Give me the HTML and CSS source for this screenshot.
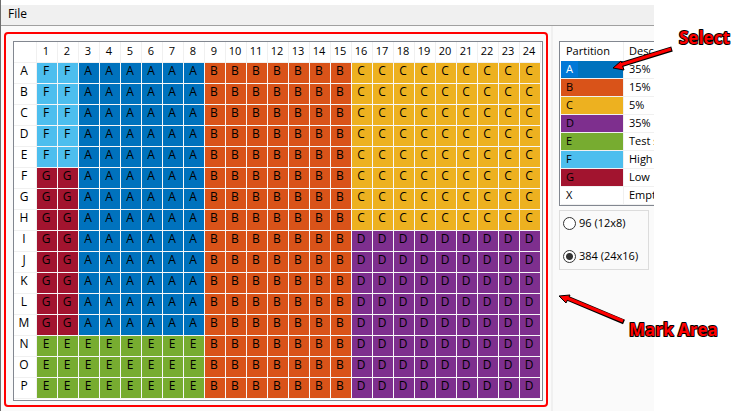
FILE: index.html
```html
<!DOCTYPE html>
<html lang="en">
<head>
<meta charset="utf-8">
<title>Plate layout</title>
<link rel="stylesheet" href="styles.css">
</head>
<body>
<div class="app">
  <nav class="menubar"><button class="menu-item" type="button">File</button></nav>
  <main class="content">
    <section class="mark-area">
      <table class="plate" id="plate"></table>
    </section>
    <aside class="side">
      <div class="list-box">
        <table class="list">
          <thead><tr><th>Partition</th><th>Description</th></tr></thead>
          <tbody>
            <tr><td class="p-A selected"><span>A</span></td><td>35%</td></tr>
            <tr><td class="p-B">B</td><td>15%</td></tr>
            <tr><td class="p-C">C</td><td>5%</td></tr>
            <tr><td class="p-D">D</td><td>35%</td></tr>
            <tr><td class="p-E">E</td><td>Test set</td></tr>
            <tr><td class="p-F">F</td><td>High</td></tr>
            <tr><td class="p-G">G</td><td>Low</td></tr>
            <tr><td>X</td><td>Empty</td></tr>
          </tbody>
        </table>
      </div>
      <div class="formats">
        <label><input type="radio" name="format">96 (12x8)</label>
        <label><input type="radio" name="format" checked>384 (24x16)</label>
      </div>
    </aside>
  </main>
</div>
<svg class="notes" width="750" height="411" viewBox="0 0 750 411">
  <path class="shaft-edge" d="M620 65 L672 49 M567 298 L624 322"/>
  <path class="head" d="M613 68 L621 61 L624 70 Z M559 296 L570 295 L566 303 Z"/>
  <path class="shaft" d="M620 65 L671 49 M567 298 L623 321"/>
  <text x="679" y="44">Select</text>
  <text x="629" y="336">Mark Area</text>
</svg>
<script src="plate.js"></script>
</body>
</html>
```
FILE: styles.css
```css
* { box-sizing: border-box; }
body {
  margin: 0;
  background: #fff;
  color: #000;
  font: 12px/16px "Open Sans", "Noto Sans", sans-serif;
}
.app {
  display: flex;
  flex-direction: column;
  min-height: 100vh;
  margin-right: 96px;
  border-left: 1px solid #6e6e6e;
  background: #fafafa;
  overflow: hidden;
}
.menubar {
  height: 26px;
  border-top: 5px solid #fff;
  border-bottom: 1px solid #a0a0a0;
  background: #f0f0f0;
}
.menu-item {
  display: block;
  padding: 1px 7px;
  border: 0;
  background: none;
  font: inherit;
}
.content { display: flex; flex: 1; }
.mark-area {
  flex: none;
  align-self: flex-start;
  margin: 6px 3px 0;
  padding: 7px 3px 4px 7px;
  border: 2px solid #f00;
  border-radius: 4px;
}
.plate, .list {
  border-collapse: separate;
  border-spacing: 0;
  background: #fff;
}
.plate {
  padding: 0 1px 1px 0;
  border: 1px solid #828790;
}
.plate th, .plate td {
  width: 21px;
  height: 21px;
  padding: 0 2px 4px 0;
  border: solid #f0f0f0;
  border-width: 0 1px 1px 0;
  font-weight: 400;
  text-align: center;
  white-space: nowrap;
}
.plate thead th {
  padding: 0 2px 2px 0;
  font-size: 11px;
}
.plate tr > :first-child { width: 23px; }
.plate td {
  border-color: #f7f7f7;
  color: #000;
}
.side {
  flex: 1;
  min-width: 0;
  padding: 15px 0 0 6px;
  border-left: 2px solid #f0f0f0;
  font-size: 11px;
}
.list-box {
  border: 1px solid #828790;
  border-right: 0;
  padding: 0 0 0 1px;
  background: #fff;
  overflow: hidden;
}
.list { table-layout: fixed; width: 160px; }
.list th, .list td {
  height: 18px;
  padding: 0 5px 1px;
  border-bottom: 1px solid #f0f0f0;
  font-weight: 400;
  text-align: left;
  line-height: 16px;
}
.list th { height: 19px; border-bottom: 0; }
.list th:first-child { width: 62px; }
.list th + th, .list td + td { border-left: 1px solid #f0f0f0; }
.list .selected span {
  display: inline-block;
  margin-left: -5px;
  padding: 0 5px;
  background: #0078d7;
  color: #fff;
}
.p-A { background: #0072bd; }
.p-B { background: #d95319; }
.p-C { background: #edb120; }
.p-D { background: #7e2f8e; }
.p-E { background: #77ac30; }
.p-F { background: #4dbeee; }
.p-G { background: #a2142f; }
.formats {
  display: flex;
  flex-direction: column;
  gap: 17px;
  width: 90px;
  margin-top: 4px;
  padding: 4px 3px 5px;
  border: 1px solid #dcdcdc;
}
.formats label {
  display: flex;
  align-items: center;
  gap: 3px;
  white-space: nowrap;
}
.formats input {
  appearance: none;
  flex: none;
  width: 13px;
  height: 13px;
  margin: 0;
  border: 1px solid #333;
  border-radius: 50%;
  background: #fff;
}
.formats input:checked { background: radial-gradient(circle, #333 3px, #fff 4px); }
.notes {
  position: absolute;
  top: 0;
  left: 0;
  pointer-events: none;
}
.notes path { stroke: #000; stroke-linejoin: round; }
.notes .head { fill: #f00; }
.notes .shaft-edge { stroke-width: 5px; }
.notes .shaft { stroke: #f00; stroke-width: 3px; }
.notes text {
  fill: #f00;
  stroke: #000;
  stroke-width: 2px;
  stroke-linejoin: round;
  paint-order: stroke;
  font: 700 17px "Open Sans", "Noto Sans", sans-serif;
}
```
FILE: plate.js
```js
// Runs of [partition, column count] shared by consecutive plate rows.
const layout = [
  { rows: "ABCDE", runs: [["F", 2], ["A", 6], ["B", 7], ["C", 9]] },
  { rows: "FGH", runs: [["G", 2], ["A", 6], ["B", 7], ["C", 9]] },
  { rows: "IJKLM", runs: [["G", 2], ["A", 6], ["B", 7], ["D", 9]] },
  { rows: "NOP", runs: [["E", 8], ["B", 7], ["D", 9]] }
];

let html = "<thead><tr><th></th>";
for (let col = 1; col <= 24; col++) html += `<th>${col}</th>`;
html += "</tr></thead><tbody>";
for (const { rows, runs } of layout) {
  const cells = runs.map(([name, count]) => `<td class="p-${name}">${name}</td>`.repeat(count)).join("");
  for (const row of rows) html += `<tr><th>${row}</th>${cells}</tr>`;
}
document.getElementById("plate").innerHTML = html + "</tbody>";
```
